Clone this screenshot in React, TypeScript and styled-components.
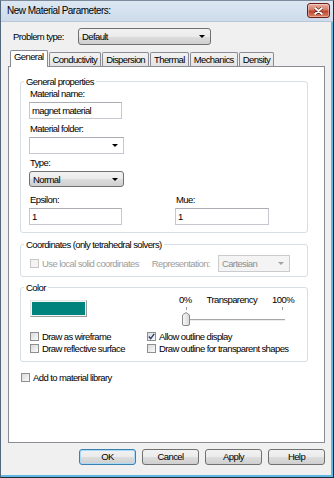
import React from 'react'
import styled, { createGlobalStyle, css } from 'styled-components'

const GlobalStyle = createGlobalStyle`
  html, body {
    margin: 0;
    padding: 0;
    background: #ffffff;
  }

  body {
    font-family: 'Liberation Sans', Arial, sans-serif;
    font-size: 9.5px;
    letter-spacing: -0.6px;
    color: #000000;
  }
`

const bevel = css`
  background: linear-gradient(#f2f2f2 0%, #ebebeb 50%, #dddddd 51%, #cfcfcf 100%);
  border: 1px solid #707070;
  border-radius: 3px;
`

const WindowStyled = styled.div`
  box-sizing: border-box;
  width: 334px;
  height: 478px;
  display: flex;
  flex-direction: column;
  background: #f0f0f0;
  border: 1px solid #1f2c3a;
  border-top-color: #7d8c9c;
  border-left-color: #55677a;
  box-shadow: inset -2px -2px 0 #5fb8e3;
`

const TitleBar = styled.div`
  box-sizing: border-box;
  flex: none;
  height: 21px;
  display: flex;
  align-items: flex-start;
  justify-content: space-between;
  padding: 0 3px 0 6px;
  background: linear-gradient(#dce7f3, #cddbea);
  border-bottom: 1px solid #b6c6d8;
`

const TitleText = styled.span`
  font-size: 10px;
  letter-spacing: -0.5px;
  line-height: 20px;
  color: #000;
`

const CloseButton = styled.div`
  box-sizing: border-box;
  width: 23px;
  height: 15px;
  margin-top: 2px;
  display: flex;
  align-items: center;
  justify-content: center;
  border: 1px solid #6b2019;
  border-radius: 3px;
  background: linear-gradient(#eab0a2 0%, #d77a66 45%, #c2412c 55%, #dc8262 100%);
  box-shadow: inset 0 0 0 1px rgba(255, 255, 255, 0.35);
`

const Body = styled.div`
  flex: 1;
  min-height: 0;
  display: flex;
  flex-direction: column;
  padding: 6px 8px 12px 7px;
`

const ProblemRow = styled.div`
  display: flex;
  align-items: center;
  height: 17px;
  padding-left: 5px;
`

const RowLabel = styled.span<{ $w?: number }>`
  width: ${p => (p.$w ? `${p.$w}px` : 'auto')};
  flex: none;
`

const Combo = styled.div<{ $w: number; $h?: number; $variant: 'button' | 'field' | 'disabled' }>`
  box-sizing: border-box;
  width: ${p => p.$w}px;
  height: ${p => p.$h ?? 17}px;
  flex: none;
  display: flex;
  align-items: center;
  justify-content: space-between;
  padding: 0 5px 0 3px;
  ${p => p.$variant === 'button' && bevel}
  ${p => p.$variant === 'field' && css`
    background: #fff;
    border: 1px solid #c5c8ce;
    border-top-color: #abadb3;
  `}
  ${p => p.$variant === 'disabled' && css`
    background: #f4f4f4;
    border: 1px solid #c9cbcf;
    color: #8d8d8d;
  `}
`

const Caret = styled.span<{ $disabled?: boolean }>`
  width: 0;
  height: 0;
  border-left: 3px solid transparent;
  border-right: 3px solid transparent;
  border-top: 3px solid ${p => (p.$disabled ? '#a4a4a4' : '#000')};
`

const TabStrip = styled.div`
  display: flex;
  align-items: flex-end;
  gap: 1px;
  height: 17px;
  margin-top: 5px;
  margin-bottom: -1px;
  padding-left: 2px;
`

const Tab = styled.div<{ $active?: boolean }>`
  box-sizing: border-box;
  position: relative;
  z-index: ${p => (p.$active ? 1 : 0)};
  height: ${p => (p.$active ? 17 : 14)}px;
  margin-bottom: ${p => (p.$active ? 0 : 1)}px;
  padding: 0 3px;
  line-height: ${p => (p.$active ? 12 : 13)}px;
  border: 1px solid #898c95;
  border-bottom: none;
  border-radius: 2px 2px 0 0;
  background: ${p => (p.$active ? '#ffffff' : 'linear-gradient(#f3f3f3, #e2e2e2)')};
`

const Panel = styled.div`
  flex: 1;
  min-height: 0;
  display: flex;
  flex-direction: column;
  padding: 9px 16px 0 11px;
  background: #ffffff;
  border: 1px solid #898c95;
`

const Group = styled.fieldset<{ $mt?: number }>`
  margin: ${p => p.$mt ?? 0}px 0 0 0;
  padding: 0;
  min-width: 0;
  border: 1px solid #d5dfe5;
  border-radius: 3px;
`

const GroupLegend = styled.legend`
  margin-left: 3px;
  padding: 0 2px;
  line-height: 11px;
`

const GroupBody = styled.div<{ $pad: string }>`
  padding: ${p => p.$pad};
`

const Field = styled.div<{ $mt?: number }>`
  display: flex;
  flex-direction: column;
  align-items: flex-start;
  margin-top: ${p => p.$mt ?? 0}px;
`

const FieldLabel = styled.span`
  line-height: 12px;
  height: 12px;
  margin: 0 0 2px 1px;
`

const TextBox = styled.div<{ $w: number }>`
  box-sizing: border-box;
  width: ${p => p.$w}px;
  height: 17px;
  padding-left: 2px;
  line-height: 15px;
  background: #fff;
  border: 1px solid #c5c8ce;
  border-top-color: #abadb3;
`

const FieldPair = styled.div`
  display: grid;
  grid-template-columns: 146px 1fr;
  margin-top: 7px;
`

const CoordRow = styled.div`
  display: flex;
  align-items: center;
  height: 17px;
  color: #9d9d9d;
`

const RepLabel = styled.span`
  margin: 0 8px 0 13px;
`

const CheckLabel = styled.label<{ $disabled?: boolean }>`
  display: flex;
  align-items: center;
  gap: 3px;
  height: 12px;
  white-space: nowrap;
  color: ${p => (p.$disabled ? '#9d9d9d' : '#000')};
`

const Box = styled.span<{ $disabled?: boolean }>`
  box-sizing: border-box;
  width: 9px;
  height: 9px;
  flex: none;
  display: flex;
  align-items: center;
  justify-content: center;
  border: 1px solid ${p => (p.$disabled ? '#c6c6c6' : '#8e8f8f')};
  background: ${p => (p.$disabled ? '#f4f4f4' : 'linear-gradient(135deg, #d9dadc, #fbfbfb)')};
`

const ColorTop = styled.div`
  display: flex;
  align-items: flex-start;
  height: 32px;
`

const Swatch = styled.div<{ $color: string }>`
  box-sizing: border-box;
  width: 57px;
  height: 17px;
  margin-top: 6px;
  background: ${p => p.$color};
  border: 1px solid;
  border-color: #e6e6e6 #9b9b9b #9b9b9b #e6e6e6;
  box-shadow: inset 0 0 0 1px #f5f5f5;
`

const SliderBlock = styled.div`
  width: 117px;
  margin-left: auto;
  display: flex;
  flex-direction: column;
`

const ScaleLabels = styled.div`
  display: flex;
  justify-content: space-between;
  line-height: 12px;
  padding-right: 2px;
`

const Ticks = styled.div`
  display: flex;
  justify-content: space-between;
  height: 3px;
  margin-top: 1px;
  padding: 0 13px 0 7px;
`

const Tick = styled.span`
  width: 1px;
  height: 3px;
  background: #a0a0a0;
`

const TrackArea = styled.div`
  position: relative;
  height: 16px;
`

const Track = styled.div`
  position: absolute;
  left: 7px;
  right: 11px;
  top: 9px;
  height: 1px;
  background: #a7a7a7;
  border-bottom: 1px solid #ececec;
`

const Thumb = styled.svg`
  position: absolute;
  left: 3px;
  top: 2px;
`

const CheckGrid = styled.div`
  display: grid;
  grid-template-columns: 117px 1fr;
  margin-top: 4px;
`

const LibraryRow = styled.div`
  margin: 9px 0 0 1px;
`

const ButtonRow = styled.div`
  display: flex;
  justify-content: flex-end;
  gap: 6px;
  margin-top: 6px;
`

const DialogButton = styled.div<{ $default?: boolean }>`
  ${bevel}
  box-sizing: border-box;
  width: 57px;
  height: 16px;
  line-height: 14px;
  text-align: center;
  ${p => p.$default && css`
    border-color: #3c7fb1;
    box-shadow: inset 0 0 0 1px #a9dbf6;
  `}
`

const CheckBox = ({ label, checked, disabled }: { label: string; checked?: boolean; disabled?: boolean }) => (
  <CheckLabel $disabled={disabled}>
    <Box $disabled={disabled}>
      {checked && (
        <svg width='7' height='7' viewBox='0 0 7 7'>
          <path d='M0.8 3.6 L2.7 5.6 L6.2 0.9' fill='none' stroke='#273f72' strokeWidth='1.4' />
        </svg>
      )}
    </Box>
    {label}
  </CheckLabel>
)

const tabs = ['General', 'Conductivity', 'Dispersion', 'Thermal', 'Mechanics', 'Density']

const App = () => (
  <>
    <GlobalStyle />
    <WindowStyled>
      <TitleBar>
        <TitleText>New Material Parameters:</TitleText>
        <CloseButton>
          <svg width='9' height='8' viewBox='0 0 9 8'>
            <path d='M1 1 L8 7 M8 1 L1 7' stroke='#5a1a12' strokeWidth='3' strokeLinecap='round' />
            <path d='M1 1 L8 7 M8 1 L1 7' stroke='#ffffff' strokeWidth='1.8' strokeLinecap='round' />
          </svg>
        </CloseButton>
      </TitleBar>

      <Body>
        <ProblemRow>
          <RowLabel $w={65}>Problem type:</RowLabel>
          <Combo $w={133} $variant='button'>
            Default
            <Caret />
          </Combo>
        </ProblemRow>

        <TabStrip>
          {tabs.map((t, i) => (
            <Tab key={t} $active={i === 0}>{t}</Tab>
          ))}
        </TabStrip>

        <Panel>
          <Group>
            <GroupLegend>General properties</GroupLegend>
            <GroupBody $pad='1px 0 7px 8px'>
              <Field>
                <FieldLabel>Material name:</FieldLabel>
                <TextBox $w={93}>magnet material</TextBox>
              </Field>
              <Field $mt={4}>
                <FieldLabel>Material folder:</FieldLabel>
                <Combo $w={95} $variant='field'>
                  <span />
                  <Caret />
                </Combo>
              </Field>
              <Field $mt={3}>
                <FieldLabel>Type:</FieldLabel>
                <Combo $w={95} $h={16} $variant='button'>
                  Normal
                  <Caret />
                </Combo>
              </Field>
              <FieldPair>
                <Field>
                  <FieldLabel>Epsilon:</FieldLabel>
                  <TextBox $w={93}>1</TextBox>
                </Field>
                <Field>
                  <FieldLabel>Mue:</FieldLabel>
                  <TextBox $w={94}>1</TextBox>
                </Field>
              </FieldPair>
            </GroupBody>
          </Group>

          <Group $mt={6}>
            <GroupLegend>Coordinates (only tetrahedral solvers)</GroupLegend>
            <GroupBody $pad='5px 0 4px 9px'>
              <CoordRow>
                <CheckBox label='Use local solid coordinates' disabled />
                <RepLabel>Representation:</RepLabel>
                <Combo $w={72} $variant='disabled'>
                  Cartesian
                  <Caret $disabled />
                </Combo>
              </CoordRow>
            </GroupBody>
          </Group>

          <Group $mt={5}>
            <GroupLegend>Color</GroupLegend>
            <GroupBody $pad='1px 11px 7px 9px'>
              <ColorTop>
                <Swatch $color='#00827d' />
                <SliderBlock>
                  <ScaleLabels>
                    <span>0%</span>
                    <span>Transparency</span>
                    <span>100%</span>
                  </ScaleLabels>
                  <Ticks>
                    <Tick />
                    <Tick />
                  </Ticks>
                  <TrackArea>
                    <Track />
                    <Thumb width='8' height='14' viewBox='0 0 8 14'>
                      <defs>
                        <linearGradient id='thumbFill' x1='0' y1='0' x2='1' y2='0'>
                          <stop offset='0' stopColor='#fafafa' />
                          <stop offset='1' stopColor='#d6d6d6' />
                        </linearGradient>
                      </defs>
                      <path d='M0.5 3 L4 0.5 L7.5 3 L7.5 12 Q7.5 13.5 6 13.5 L2 13.5 Q0.5 13.5 0.5 12 Z' fill='url(#thumbFill)' stroke='#8a8a8a' />
                    </Thumb>
                  </TrackArea>
                </SliderBlock>
              </ColorTop>
              <CheckGrid>
                <CheckBox label='Draw as wireframe' />
                <CheckBox label='Allow outline display' checked />
                <CheckBox label='Draw reflective surface' />
                <CheckBox label='Draw outline for transparent shapes' />
              </CheckGrid>
            </GroupBody>
          </Group>

          <LibraryRow>
            <CheckBox label='Add to material library' />
          </LibraryRow>
        </Panel>

        <ButtonRow>
          <DialogButton $default>OK</DialogButton>
          <DialogButton>Cancel</DialogButton>
          <DialogButton>Apply</DialogButton>
          <DialogButton>Help</DialogButton>
        </ButtonRow>
      </Body>
    </WindowStyled>
  </>
)

export default App
